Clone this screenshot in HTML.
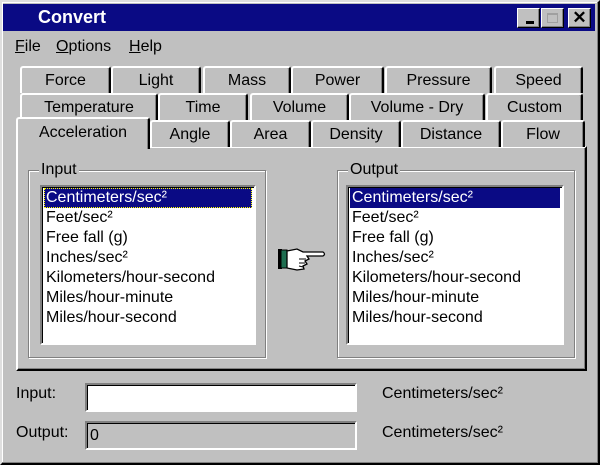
<!DOCTYPE html>
<html><head><style>
*{margin:0;padding:0;box-sizing:border-box}
body{width:600px;height:465px;background:#c0c0c0;font-family:"Liberation Sans",Arial,sans-serif;font-size:16px;color:#000;position:relative;overflow:hidden}
.a{position:absolute}
.title{left:3px;top:4px;width:592px;height:27px;background:#0a0a84;color:#fff;font-weight:bold;font-size:18px}
.btn{position:absolute;top:4px;width:23px;height:20px;background:#c0c0c0;border:1px solid;border-color:#fff #000 #000 #fff;box-shadow:inset -1px -1px #808080;text-align:center;color:#000}
.tab{position:absolute;height:27px;background:#c0c0c0;border-top:2px solid #fff;border-left:2px solid #fff;border-right:2px solid #000;border-radius:3px 3px 0 0;text-align:center;line-height:26px;box-shadow:inset -1px 0 #808080}
.grp{position:absolute;border:1px solid #808080;box-shadow:1px 1px #fff, inset 1px 1px #fff}
.lbl{position:absolute;background:#c0c0c0;padding:0 2px;top:-11px;left:10px;line-height:20px}
.list{position:absolute;background:#fff;border:2px solid;border-color:#808080 #fff #fff #808080;box-shadow:inset 1px 1px #000}
.list div{height:20px;line-height:20px;padding-left:4px;white-space:nowrap}
.sel{background:#0a0a84;color:#fff;margin:1px 2px 0 2px;padding-left:2px!important}
.edit{position:absolute;border:2px solid;border-color:#808080 #fff #fff #808080;box-shadow:inset 1px 1px #000}
</style></head><body>
<div class="a" style="left:0;top:0;width:600px;height:465px;border:2px solid;border-color:#dfdfdf #000 #000 #dfdfdf;box-shadow:inset -1px -1px #808080,inset 1px 1px #fff"></div>
<div class="a title"><span style="position:absolute;left:35px;top:3px">Convert</span>
<div class="btn" style="left:514px">&nbsp;</div><div class="a" style="left:523px;top:17px;width:8px;height:3px;background:#000"></div>
<div class="btn" style="left:538px"></div><div class="a" style="left:544px;top:9px;width:11px;height:10px;border:1px solid #a0a0a0;border-top-width:2px"></div>
<div class="btn" style="left:565px;font-weight:bold;font-size:17px;line-height:18px">✕</div>
</div>
<div class="a" style="left:15px;top:38px"><u>F</u>ile</div>
<div class="a" style="left:56px;top:38px"><u>O</u>ptions</div>
<div class="a" style="left:129px;top:38px"><u>H</u>elp</div>

<div class="tab" style="left:20px;top:66px;width:91px">Force</div>
<div class="tab" style="left:111px;top:66px;width:90px">Light</div>
<div class="tab" style="left:203px;top:66px;width:88px">Mass</div>
<div class="tab" style="left:291px;top:66px;width:93px">Power</div>
<div class="tab" style="left:385px;top:66px;width:107px">Pressure</div>
<div class="tab" style="left:494px;top:66px;width:89px">Speed</div>

<div class="tab" style="left:20px;top:93px;width:138px">Temperature</div>
<div class="tab" style="left:158px;top:93px;width:90px">Time</div>
<div class="tab" style="left:250px;top:93px;width:99px">Volume</div>
<div class="tab" style="left:349px;top:93px;width:136px">Volume - Dry</div>
<div class="tab" style="left:486px;top:93px;width:97px">Custom</div>

<div class="a" style="left:16px;top:146px;width:571px;height:225px;border:2px solid;border-color:#fff #000 #000 #fff;box-shadow:inset -1px -1px #808080"></div>
<div class="tab" style="left:150px;top:120px;width:80px">Angle</div>
<div class="tab" style="left:230px;top:120px;width:81px">Area</div>
<div class="tab" style="left:311px;top:120px;width:90px">Density</div>
<div class="tab" style="left:401px;top:120px;width:100px">Distance</div>
<div class="tab" style="left:501px;top:120px;width:84px">Flow</div>
<div class="tab" style="left:16px;top:117px;width:134px;height:32px;line-height:28px;border-bottom:none">Acceleration</div>

<div class="grp" style="left:28px;top:170px;width:238px;height:188px"><span class="lbl">Input</span></div>
<div class="list" style="left:40px;top:185px;width:216px;height:160px">
<div class="sel" style="outline:1px dotted #ff0;outline-offset:-1px">Centimeters/sec²</div><div>Feet/sec²</div><div>Free fall (g)</div><div>Inches/sec²</div><div>Kilometers/hour-second</div><div>Miles/hour-minute</div><div>Miles/hour-second</div></div>

<div class="grp" style="left:337px;top:170px;width:238px;height:188px"><span class="lbl">Output</span></div>
<div class="list" style="left:346px;top:185px;width:218px;height:160px">
<div class="sel">Centimeters/sec²</div><div>Feet/sec²</div><div>Free fall (g)</div><div>Inches/sec²</div><div>Kilometers/hour-second</div><div>Miles/hour-minute</div><div>Miles/hour-second</div></div>

<svg class="a" style="left:277px;top:245px" width="50" height="28" viewBox="0 0 50 28">
<rect x="1" y="4" width="4" height="20" fill="#000"/><rect x="4" y="5" width="6" height="18" fill="#1e6e50" stroke="#000"/>
<path d="M10 6 L20 4 L26 7 L46 7 Q49 9 46 11 L30 11 L32 14 L28 16 L30 19 L26 21 L27 24 L20 25 L10 23 Z" fill="#fff" stroke="#000" stroke-width="1.3"/>
<path d="M22 14 L29 14 M22 18 L28 18 M22 21 L26 22" stroke="#000" fill="none"/>
</svg>

<div class="a" style="left:16px;top:385px">Input:</div>
<div class="edit" style="left:85px;top:383px;width:272px;height:29px;background:#fff"></div>
<div class="a" style="left:382px;top:385px">Centimeters/sec²</div>
<div class="a" style="left:16px;top:424px">Output:</div>
<div class="edit" style="left:85px;top:421px;width:272px;height:29px;background:#c0c0c0"><span style="position:absolute;left:3px;top:4px">0</span></div>
<div class="a" style="left:382px;top:424px">Centimeters/sec²</div>
</body></html>
